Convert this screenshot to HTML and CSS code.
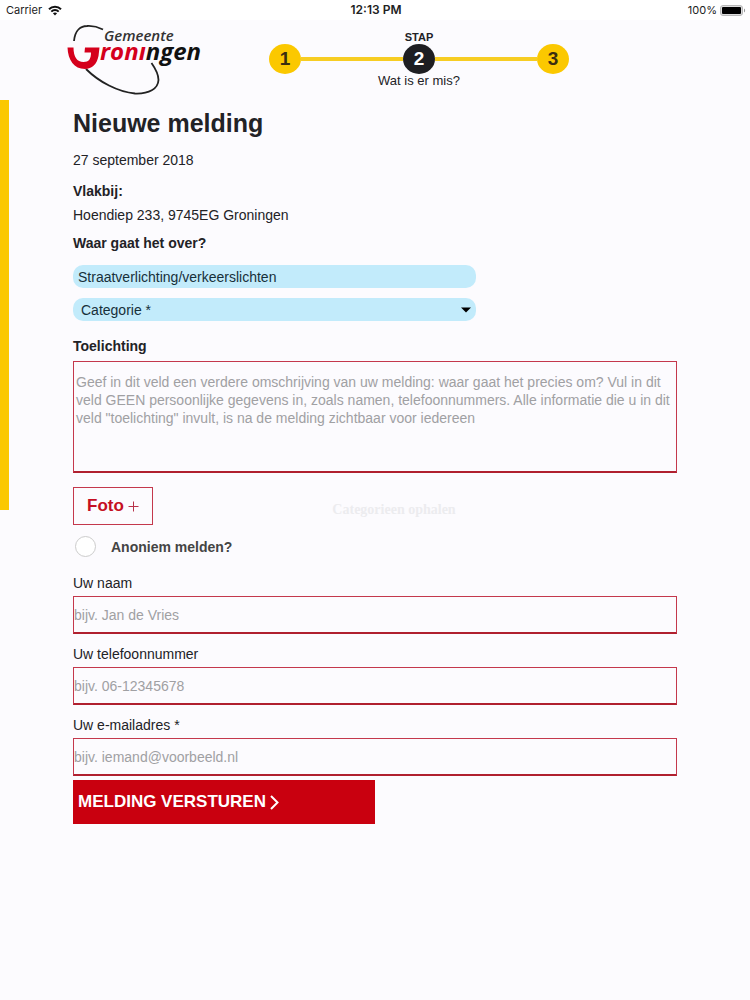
FILE: index.html
```
<!DOCTYPE html>
<html lang="nl">
  <head>
    <meta charset="utf-8">
    <meta name="viewport" content="width=device-width, initial-scale=1">
    <title>Nieuwe melding</title>
    <link rel="stylesheet" href="styles.css">
  </head>
  <body>
    <div class="statusbar">
      <div class="carrier">
        <span>Carrier</span>
        <svg width="14" height="11" viewBox="0 0 14 11" fill="none" stroke="#111" stroke-width="2">
          <path d="M1 4.2C4.3 0.9 9.7 0.9 13 4.2"/>
          <path d="M3.3 6.6C5.4 4.6 8.6 4.6 10.7 6.6"/>
          <path d="M7 10.5L4.9 8.3C6.1 7.2 7.9 7.2 9.1 8.3Z" fill="#111" stroke="none"/>
        </svg>
      </div>
      <div class="time">12:13 PM</div>
      <div class="battery">
        <span>100%</span>
        <svg width="26" height="11" viewBox="0 0 26 11">
          <rect x="0.5" y="0.5" width="22" height="10" rx="2.5" fill="#ddd" stroke="#b8b8b8"/>
          <rect x="2" y="2" width="19" height="7" rx="1" fill="#000"/>
          <path d="M24 3.5C25.5 4 25.5 7 24 7.5Z" fill="#999"/>
        </svg>
      </div>
    </div>

    <header class="header">
      <svg class="logo" viewBox="0 0 134 72" role="img" aria-label="Gemeente Groningen">
        <path d="M7 16C8 5 14 1 20 1C26 0.6 31 2 36 4.5" fill="none" stroke="#222" stroke-width="1.8"/>
        <path d="M19 44C32 57 51 67 68 68.5C82 69 91 64 91.5 55C91.500 48 88 43 84.500 38" fill="none" stroke="#222" stroke-width="1.8"/>
        <path d="M0.500 22.500H6.500C6.500 32 10 37 16.500 37C22 37 24 34 24 27.500H17.500L18 22.500H32.500L31.500 31C30 39 25 44 18 44C7 44 1 35 0.500 22.500Z" fill="#d5001c"/>
        <text class="logo-small" x="37" y="16">Gemeente</text>
        <text class="logo-big" x="33" y="35"><tspan fill="#d5001c">ronı</tspan>ngen</text>
      </svg>
      <ol class="steps">
        <li class="caption">STAP</li>
        <li class="dot">1</li>
        <li class="line"></li>
        <li class="dot active">2</li>
        <li class="line"></li>
        <li class="dot">3</li>
        <li class="step-name">Wat is er mis?</li>
      </ol>
    </header>

    <main class="main">
      <div class="accent"></div>
      <form class="form">
        <h1>Nieuwe melding</h1>
        <p class="date">27 september 2018</p>
        <h2>Vlakbij:</h2>
        <p class="address">Hoendiep 233, 9745EG Groningen</p>
        <h2><label for="onderwerp">Waar gaat het over?</label></h2>
        <input class="pill" id="onderwerp" type="text" value="Straatverlichting/verkeerslichten">
        <div class="select">
          <select class="pill" aria-label="Categorie">
            <option>Categorie *</option>
          </select>
          <svg class="arrow" width="10" height="6" viewBox="0 0 10 6"><path d="M0 0.5H10L5 5.5Z" fill="#000"/></svg>
        </div>
        <h2><label for="toelichting">Toelichting</label></h2>
        <textarea class="field area" id="toelichting" placeholder='Geef in dit veld een verdere omschrijving van uw melding: waar gaat het precies om? Vul in dit veld GEEN persoonlijke gegevens in, zoals namen, telefoonnummers. Alle informatie die u in dit veld "toelichting" invult, is na de melding zichtbaar voor iedereen'></textarea>
        <div class="photo-row">
          <button class="photo" type="button">Foto
            <svg width="11" height="11" viewBox="0 0 11 11"><path d="M5.5 0.5V10.5M0.5 5.5H10.5" stroke="#b8324a" stroke-width="1"/></svg>
          </button>
          <span class="loading">Categorieen ophalen</span>
        </div>
        <label class="anonymous"><input type="checkbox"> Anoniem melden?</label>

        <label class="name" for="naam">Uw naam</label>
        <input class="field" id="naam" type="text" placeholder="bijv. Jan de Vries">
        <label class="name" for="telefoon">Uw telefoonnummer</label>
        <input class="field" id="telefoon" type="tel" placeholder="bijv. 06-12345678">
        <label class="name" for="email">Uw e-mailadres *</label>
        <input class="field" id="email" type="email" placeholder="bijv. iemand@voorbeeld.nl">
        <button class="submit" type="submit">MELDING VERSTUREN
          <svg width="9" height="15" viewBox="0 0 9 15"><path d="M1 1L7.5 7.5L1 14" fill="none" stroke="#fff" stroke-width="2"/></svg>
        </button>
      </form>
    </main>
  </body>
</html>
```

FILE: styles.css
```
* {
  box-sizing: border-box;
}

body {
  margin: 0;
  min-height: 100vh;
  background: #fcfbfe;
  color: #222226;
  font-family: "Liberation Sans", Arial, sans-serif;
  font-size: 14px;
  line-height: 18px;
}

/* status bar */
.statusbar {
  display: grid;
  grid-template-columns: 1fr auto 1fr;
  align-items: center;
  height: 20px;
  padding: 0 4px 0 6px;
  background: #fff;
  color: #222;
  font-family: Inter, "Liberation Sans", sans-serif;
  font-size: 11px;
}

.carrier,
.battery {
  display: flex;
  align-items: center;
  gap: 6px;
}

.battery {
  justify-content: flex-end;
  gap: 3px;
}

.time {
  font-size: 12px;
  font-weight: 600;
}

/* header */
.header {
  display: flex;
  align-items: flex-start;
  gap: 68px;
  height: 80px;
  padding: 5px 67px 0;
}

.logo {
  width: 134px;
  height: 72px;
  overflow: visible;
}

.logo-small,
.logo-big {
  font-family: "Open Sans", sans-serif;
  font-style: italic;
}

.logo-small {
  font-size: 15px;
  font-weight: 600;
  fill: #333;
}

.logo-big {
  font-size: 24px;
  font-weight: 700;
  fill: #111;
}

.steps {
  display: grid;
  grid-template-columns: 32px 1fr 32px 1fr 32px;
  align-items: center;
  width: 40vw;
  margin: 5px 0 0;
  padding: 0;
  list-style: none;
  text-align: center;
}

.caption,
.step-name {
  grid-column: 1 / -1;
}

.caption {
  font-size: 11px;
  font-weight: bold;
  line-height: 14px;
}

.step-name {
  font-size: 13px;
  line-height: 14px;
}

.dot {
  height: 30px;
  border-radius: 50%;
  background: #fbc800;
  color: #3a2e10;
  font-size: 19px;
  font-weight: bold;
  line-height: 30px;
}

.dot.active {
  background: #1e1e22;
  color: #fff;
}

.line {
  height: 4px;
  background: #f7cd23;
}

/* form */
.main {
  display: flex;
  align-items: flex-start;
}

.accent {
  width: 9px;
  height: 410px;
  background: #fbc800;
}

.form {
  flex: 1;
  padding: 8px 73px 40px 64px;
}

h1 {
  margin: 0;
  font-size: 25px;
  line-height: 30px;
}

h2 {
  margin: 0;
  font-size: 14px;
  line-height: 18px;
}

p {
  margin: 0;
}

.date {
  margin: 13px 0;
}

.address {
  margin: 6px 0 10px;
}

input,
select,
textarea,
button {
  font-family: inherit;
  font-size: 14px;
  color: inherit;
}

.pill {
  display: block;
  width: 100%;
  height: 23px;
  padding: 0 5px;
  border: 0;
  border-radius: 10px;
  background: #c2ebfb;
  color: #17303a;
  appearance: none;
}

input.pill {
  width: 66.67%;
  margin-top: 13px;
}

.select {
  position: relative;
  width: 66.67%;
  margin: 10px 0 16px;
}

.select .pill {
  padding: 0 8px;
}

.arrow {
  position: absolute;
  top: 9px;
  right: 5px;
  pointer-events: none;
}

.field {
  display: block;
  width: 100%;
  height: 38px;
  padding: 0;
  border: 1px solid #c4384c;
  border-bottom: 2px solid #b0202f;
  border-radius: 0;
  background: transparent;
}

.field::placeholder {
  color: #a0a0a3;
}

.area {
  height: 112px;
  margin-top: 6px;
  padding: 11px 2px;
  line-height: 18px;
  resize: none;
  overflow: hidden;
}

.photo-row {
  display: flex;
  align-items: center;
  margin-top: 14px;
}

.photo {
  display: flex;
  align-items: center;
  justify-content: center;
  gap: 4px;
  width: 80px;
  height: 38px;
  padding: 0;
  border: 1px solid #c4384c;
  background: transparent;
  color: #c50f22;
  font-size: 17px;
  font-weight: bold;
}

.loading {
  flex: 1;
  padding: 8px 42px 0 0;
  color: #ececef;
  font-family: "Liberation Serif", serif;
  font-weight: bold;
  text-align: center;
}

.anonymous {
  display: flex;
  align-items: center;
  gap: 15px;
  margin: 11px 0 17px;
  color: #444;
  font-weight: bold;
}

.anonymous input {
  width: 21px;
  height: 21px;
  margin: 0 0 0 2px;
  border: 1px solid #ccc;
  border-radius: 50%;
  background: #fff;
  appearance: none;
}

.name {
  display: block;
  margin: 11px 0 4px;
}

.submit {
  display: flex;
  align-items: center;
  gap: 4px;
  width: 50%;
  height: 44px;
  margin-top: 4px;
  padding: 0 5px;
  border: 0;
  background: #c9000f;
  color: #fff;
  font-size: 17px;
  font-weight: bold;
}
```
